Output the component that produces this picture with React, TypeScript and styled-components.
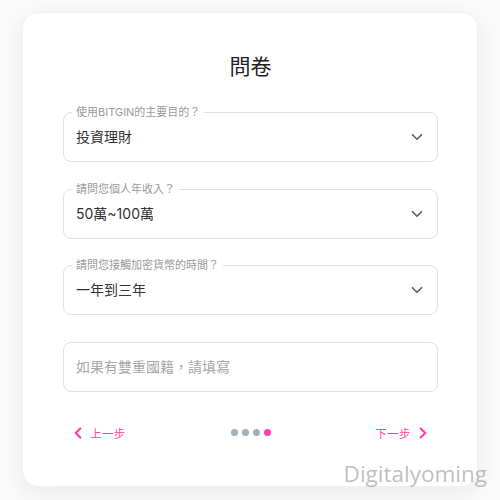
import React from "react";
import styled, { createGlobalStyle } from "styled-components";
import { ChevronDown, ChevronLeft, ChevronRight } from "lucide-react";

const Global = createGlobalStyle`
  html, body { margin: 0; padding: 0; background: #ffffff; }
  body { font-family: "Inter", "Noto Sans CJK TC", sans-serif; }
  * { box-sizing: border-box; }
`;

const Page = styled.div`
  position: relative;
  width: 500px;
  height: 500px;
  padding: 12px 22px 13px 22px;
  background: #fbfbfc;
`;

const Card = styled.div`
  width: 456px;
  height: 475px;
  background: #ffffff;
  border: 1px solid #f1f1f3;
  border-radius: 16px;
  box-shadow: 0 6px 28px rgba(20, 20, 40, 0.08);
  padding: 40px 39px 0 40px;
  display: flex;
  flex-direction: column;
`;

const Title = styled.h1`
  margin: 0 0 31px 0;
  font-size: 21px;
  line-height: 28px;
  font-weight: 400;
  color: #222;
  text-align: center;
`;

const Fields = styled.div`
  display: flex;
  flex-direction: column;
  gap: 26.5px;
`;

const Box = styled.div`
  position: relative;
  height: 50px;
  border: 1px solid #dfe1e5;
  border-radius: 8px;
  padding: 0 12px;
  display: flex;
  align-items: center;
  justify-content: space-between;
`;

const FloatLabel = styled.span`
  position: absolute;
  top: -7px;
  left: 8px;
  padding: 0 4px;
  background: #fff;
  font-size: 11px;
  line-height: 12px;
  color: #9a9a9a;
`;

const Value = styled.span<{ $placeholder?: boolean }>`
  font-size: 14px;
  line-height: 20px;
  color: ${(p) => (p.$placeholder ? "#a8a8a8" : "#333")};
`;

const Caret = styled(ChevronDown)`
  color: #5f5f5f;
  margin-right: -1px;
`;

const Footer = styled.div`
  margin-top: 31px;
  height: 20px;
  padding: 0 6px;
  display: flex;
  align-items: center;
  justify-content: space-between;
`;

const NavButton = styled.button`
  display: flex;
  align-items: center;
  gap: 3px;
  border: 0;
  background: none;
  padding: 0;
  color: #ff3fa8;
  font-family: "Noto Sans CJK TC", sans-serif;
  font-size: 11.5px;
  letter-spacing: 0.4px;
  cursor: pointer;
`;

const Dots = styled.div`
  display: flex;
  gap: 4px;
`;

const Dot = styled.span<{ $active?: boolean }>`
  width: 7px;
  height: 7px;
  border-radius: 50%;
  background: ${(p) => (p.$active ? "#ff3fa8" : "#a3adbd")};
`;

const Watermark = styled.div`
  position: absolute;
  right: 13px;
  bottom: 11px;
  font-family: "Open Sans", sans-serif;
  font-size: 22.5px;
  line-height: 30px;
  color: rgba(170, 170, 170, 0.75);
`;

const selects = [
  { label: "使用BITGIN的主要目的？", value: "投資理財" },
  { label: "請問您個人年收入？", value: "50萬~100萬" },
  { label: "請問您接觸加密貨幣的時間？", value: "一年到三年" },
];

export default function App() {
  return (
    <Page>
      <Global />
      <Card>
        <Title>問卷</Title>
        <Fields>
          {selects.map((s) => (
            <Box key={s.label}>
              <FloatLabel>{s.label}</FloatLabel>
              <Value>{s.value}</Value>
              <Caret size={18} strokeWidth={2.2} />
            </Box>
          ))}
          <Box>
            <Value $placeholder>如果有雙重國籍，請填寫</Value>
          </Box>
        </Fields>
        <Footer>
          <NavButton>
            <ChevronLeft size={18} strokeWidth={3} />
            上一步
          </NavButton>
          <Dots>
            <Dot />
            <Dot />
            <Dot />
            <Dot $active />
          </Dots>
          <NavButton>
            下一步
            <ChevronRight size={18} strokeWidth={3} />
          </NavButton>
        </Footer>
      </Card>
      <Watermark>Digitalyoming</Watermark>
    </Page>
  );
}
